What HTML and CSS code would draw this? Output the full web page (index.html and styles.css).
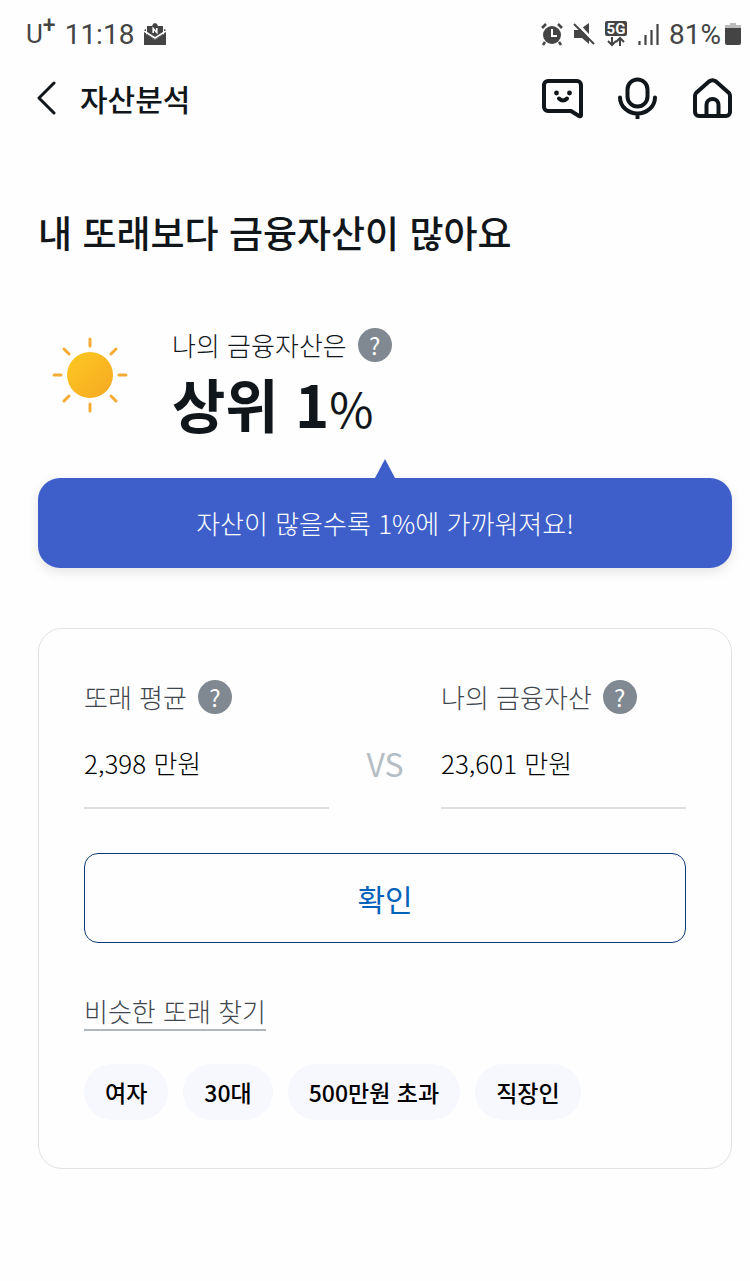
FILE: index.html
```html
<!DOCTYPE html>
<html lang="ko">
<head>
    <meta charset="UTF-8">
    <meta name="viewport" content="width=device-width, initial-scale=1.0">
    <title>자산분석</title>
    <link rel="stylesheet" href="styles.css">
</head>
<body>
<div class="status-bar">
    <div class="status-left">
      <span class="carrier">U<sup>+</sup></span>
      <span>11:18</span>
      <svg class="mail-icon" width="24" height="24" viewBox="0 0 24 24">
        <path d="M4 4h5q1-3 3-3t3 3h5v9l-8 5-8-5z" fill="#444"/>
        <path d="M1 8l2-1v5l9 6 9-6V7l2 1v15H1z" fill="#444"/>
        <path d="M1 9l11 7 11-7" fill="none" stroke="#fff" stroke-width="1.500"/>
        <path d="M10.200 11V6.500l3.600 4V6" fill="none" stroke="#fff" stroke-width="1.600"/>
      </svg>
    </div>
    <div class="status-right">
      <svg width="22" height="24" viewBox="0 0 22 24">
        <circle cx="11" cy="13" r="9" fill="#444"/>
        <path d="M1 6l4-4M21 6l-4-4M4 20l-2 3M18 20l2 3" stroke="#444" stroke-width="2.500"/>
        <path d="M11 7v7h5" fill="none" stroke="#fff" stroke-width="2"/>
      </svg>
      <svg width="22" height="24" viewBox="0 0 22 24">
        <path d="M1 8h5l10-7v21l-7-6H1z" fill="#444"/>
        <path d="M3 0l20 22" stroke="#fff" stroke-width="3"/>
        <path d="M1 2l20 20" stroke="#444" stroke-width="2"/>
      </svg>
      <svg width="22" height="26" viewBox="0 0 22 26">
        <rect width="22" height="15" rx="2" fill="#444"/>
        <text class="network" x="11" y="13" text-anchor="middle">5G</text>
        <path d="M7 16v8M3 20l4 4 4-4M15 25v-8M11 21l4-4 4 4" fill="none" stroke="#444" stroke-width="2"/>
      </svg>
      <svg width="22" height="24" viewBox="0 0 22 24">
        <path d="M2.500 23v-4M8.500 23V13M14.500 23V8M20.500 23V2" stroke="#444" stroke-width="2.200"/>
      </svg>
      <span class="battery">81%
        <svg width="16" height="22" viewBox="0 0 16 22">
          <path d="M5 0h6v2h5v4H0V2h5z" fill="#bbb"/>
          <path d="M0 5h16v15a2 2 0 0 1-2 2H2a2 2 0 0 1-2-2z" fill="#444"/>
        </svg>
      </span>
    </div>
</div>

<header class="top-nav">
    <button type="button" class="icon-btn back" aria-label="뒤로">
      <svg width="20" height="36" viewBox="0 0 20 36"><path d="M18 3L3 18l15 15"/></svg>
    </button>
    <h1>자산분석</h1>
    <nav class="nav-icons">
      <button type="button" class="icon-btn" aria-label="챗봇">
        <svg width="42" height="42" viewBox="0 0 42 42">
          <path d="M7 4h29a4 4 0 0 1 4 4v30q0 2-2 1l-8-5H7a4 4 0 0 1-4-4V8a4 4 0 0 1 4-4z"/>
          <path d="M18 21.500q4 4 8 0"/>
          <circle class="dot" cx="15.500" cy="16" r="2.400"/>
          <circle class="dot" cx="28.500" cy="16" r="2.400"/>
        </svg>
      </button>
      <button type="button" class="icon-btn" aria-label="음성">
        <svg width="42" height="42" viewBox="0 0 42 42">
          <rect x="11.500" y="2.500" width="20" height="27" rx="10"/>
          <path d="M4 20.500a17.500 16 0 0 0 35 0M21.500 37v4"/>
        </svg>
      </button>
      <button type="button" class="icon-btn" aria-label="홈">
        <svg width="42" height="42" viewBox="0 0 42 42">
          <path d="M5 16L18 4.500q3.500-2.500 7 0L38 16q1 1.500 1 3v16a4 4 0 0 1-4 4H8a4 4 0 0 1-4-4V19q0-1.500 1-3z"/>
          <path d="M15.500 39V28a6 6 0 0 1 12 0v11"/>
        </svg>
      </button>
    </nav>
</header>

<main class="main-content">
    <h2>내 또래보다 금융자산이 많아요</h2>

    <section class="rank">
      <svg class="sun" width="76" height="76" viewBox="0 0 76 76">
        <defs>
          <linearGradient id="sunFill" x1="0" y1="0" x2="1" y2="1">
            <stop offset="0" stop-color="#fcc921"/>
            <stop offset="1" stop-color="#f7a823"/>
          </linearGradient>
        </defs>
        <circle cx="38" cy="38" r="23" fill="url(#sunFill)"/>
        <path d="M38 2v7M38 67v7M2 38h7M67 38h7M12 12l5 5M59 59l5 5M64 12l-5 5M17 59l-5 5" stroke="#f5ac35" stroke-width="3" stroke-linecap="round"/>
      </svg>
      <div>
        <p class="label dark">나의 금융자산은
          <button type="button" class="help" aria-label="금융자산 도움말">?</button>
        </p>
        <p class="rank-value">상위 1<span>%</span></p>
      </div>
    </section>

    <div class="banner">자산이 많을수록 1%에 가까워져요!</div>

    <section class="card">
      <form class="compare">
        <div class="field">
          <div class="label">
            <label for="average">또래 평균</label>
            <button type="button" class="help" aria-label="또래 평균 도움말">?</button>
          </div>
          <input type="text" id="average" value="2,398 만원" readonly>
        </div>
        <span class="vs">VS</span>
        <div class="field">
          <div class="label">
            <label for="mine">나의 금융자산</label>
            <button type="button" class="help" aria-label="나의 금융자산 도움말">?</button>
          </div>
          <input type="text" id="mine" value="23,601 만원" readonly>
        </div>
        <button type="button" class="confirm">확인</button>
      </form>

      <a class="find" href="#">비슷한 또래 찾기</a>
      <ul class="tags">
        <li>여자</li>
        <li>30대</li>
        <li>500만원 초과</li>
        <li>직장인</li>
      </ul>
    </section>
</main>
</body>
</html>
```
FILE: styles.css
```css
* {
  box-sizing: border-box;
}

body {
  font-family: "Noto Sans CJK KR", sans-serif;
  background-color: #fefefe;
  color: #11161b;
  margin: 0;
  padding: 0;
}

h1, h2, p, ul {
  margin: 0;
  padding: 0;
}

button {
  font-family: inherit;
  padding: 0;
  border: none;
  background: none;
  cursor: pointer;
}

svg {
  display: block;
}

/* status bar */
.status-bar {
  display: flex;
  justify-content: space-between;
  align-items: center;
  height: 68px;
  padding: 0 9px 0 26px;
  font-family: Roboto, sans-serif;
  font-size: 28px;
  color: #444;
}

.status-left, .status-right {
  display: flex;
  align-items: center;
  gap: 10px;
}

.status-left {
  gap: 9px;
}

.carrier {
  font-size: 26px;
}

.carrier sup {
  font-size: 23px;
  font-weight: 500;
  line-height: 0;
}

.network {
  font-size: 15px;
  font-weight: 700;
  fill: #fff;
}

.battery {
  display: flex;
  align-items: center;
  gap: 4px;
}

/* header */
.top-nav {
  display: flex;
  align-items: center;
  height: 60px;
  padding: 0 17px 0 36px;
}

.top-nav h1 {
  flex: 1;
  margin-left: 24px;
  font-size: 30px;
  font-weight: 500;
  line-height: 40px;
}

.nav-icons {
  display: flex;
  gap: 33px;
}

.icon-btn svg {
  fill: none;
  stroke: #11161b;
  stroke-width: 4;
  stroke-linecap: round;
  stroke-linejoin: round;
}

.back svg {
  stroke-width: 3;
}

.icon-btn .dot {
  fill: #11161b;
  stroke: none;
}

/* content */
.main-content {
  padding: 76px 18px 40px 38px;
}

h2 {
  font-size: 37px;
  font-weight: 500;
  line-height: 56px;
}

.rank {
  display: flex;
  align-items: flex-start;
  gap: 44px;
  margin-top: 65px;
}

.sun {
  margin: 12px 0 0 14px;
}

.label {
  display: flex;
  align-items: center;
  gap: 11px;
  font-size: 26px;
  font-weight: 300;
  line-height: 40px;
  color: #40464d;
}

.label.dark {
  color: #11161b;
}

.help {
  width: 34px;
  height: 34px;
  border-radius: 50%;
  background-color: #808891;
  color: #fff;
  font-size: 24px;
  line-height: 34px;
}

.rank-value {
  font-size: 58px;
  font-weight: 700;
  line-height: 76px;
}

.rank-value span {
  font-size: 48px;
  font-weight: 400;
}

.banner {
  position: relative;
  margin-top: 33px;
  padding: 24px;
  border-radius: 22px;
  background-color: #3e5fca;
  box-shadow: 0 4px 12px rgba(0,0,0,0.1);
  color: #fff;
  font-size: 26px;
  font-weight: 300;
  line-height: 42px;
  text-align: center;
}

.banner::before {
  content: "";
  position: absolute;
  left: 50%;
  bottom: 100%;
  margin-left: -10px;
  border: 10px solid transparent;
  border-top: 0;
  border-bottom: 19px solid #3e5fca;
}

.card {
  margin-top: 60px;
  padding: 48px 45px;
  border: 1px solid #dfe3e6;
  border-radius: 24px;
}

.compare {
  display: grid;
  grid-template-columns: 1fr 112px 1fr;
}

.field input {
  width: 100%;
  height: 72px;
  margin-top: 20px;
  padding: 0 0 20px;
  border: none;
  border-bottom: 2px solid #dbdfe2;
  border-radius: 0;
  background: none;
  color: #000;
  font-family: inherit;
  font-size: 26px;
  font-weight: 300;
  outline: none;
}

.vs {
  align-self: end;
  padding-bottom: 24px;
  color: #b5bdc4;
  font-size: 32px;
  line-height: 44px;
  text-align: center;
}

.confirm {
  grid-column: 1 / -1;
  height: 90px;
  margin-top: 44px;
  border: 1px solid #0c3a78;
  border-radius: 14px;
  color: #0062b8;
  font-size: 30px;
}

.find {
  display: inline-block;
  margin-top: 50px;
  border-bottom: 2px solid #afb6bc;
  color: #40464d;
  font-size: 26px;
  font-weight: 300;
  line-height: 36px;
  text-decoration: none;
}

.tags {
  display: flex;
  flex-wrap: wrap;
  gap: 15px;
  margin-top: 33px;
  list-style: none;
}

.tags li {
  padding: 0 21px;
  border-radius: 28px;
  background-color: #f7f8fd;
  color: #000;
  font-size: 23px;
  font-weight: 500;
  line-height: 56px;
}
```
